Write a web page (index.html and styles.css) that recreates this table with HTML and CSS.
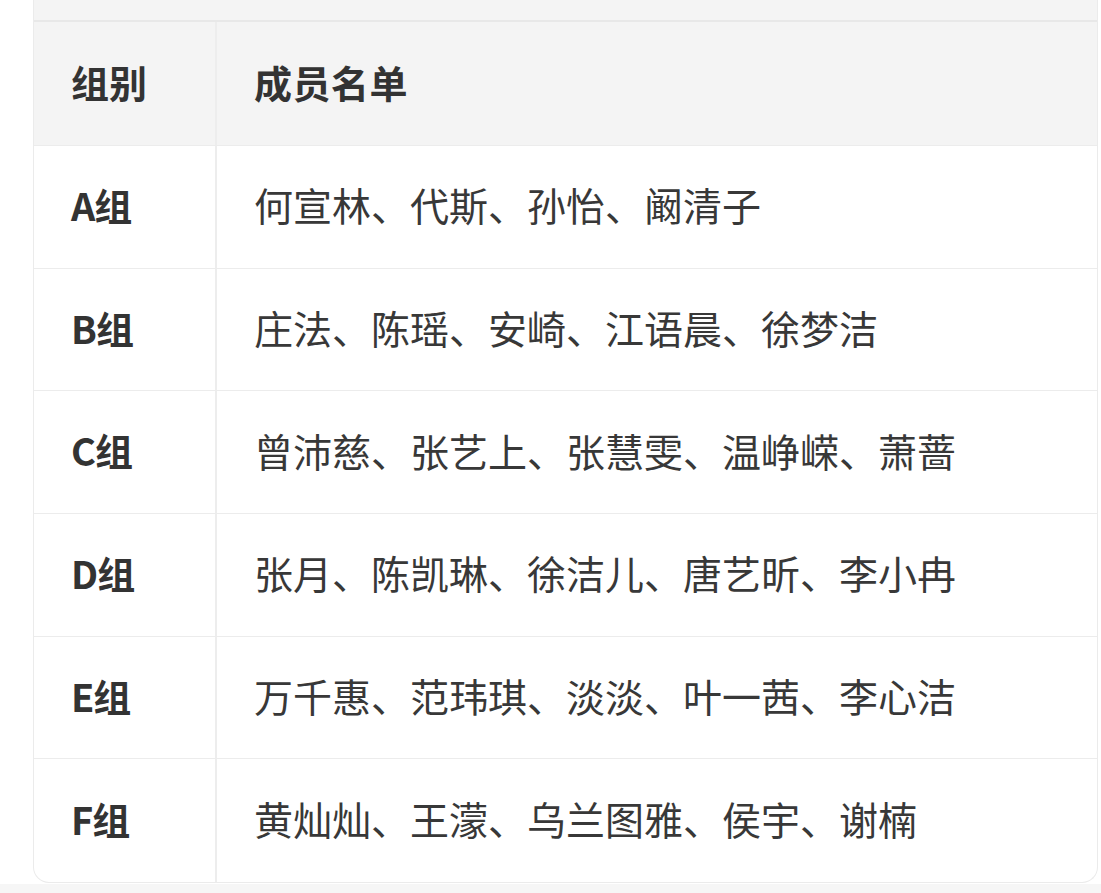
FILE: index.html
```html
<!DOCTYPE html>
<html lang="zh">
<head>
<meta charset="utf-8">
<link rel="stylesheet" href="styles.css">
</head>
<body>
<div class="page">
  <div class="card">
    <div class="strip"></div>
    <div class="row head">
      <div class="cell c1">组别</div>
      <div class="cell c2">成员名单</div>
    </div>
    <div class="row">
      <div class="cell c1 label">A组</div>
      <div class="cell c2">何宣林、代斯、孙怡、阚清子</div>
    </div>
    <div class="row">
      <div class="cell c1 label">B组</div>
      <div class="cell c2">庄法、陈瑶、安崎、江语晨、徐梦洁</div>
    </div>
    <div class="row">
      <div class="cell c1 label">C组</div>
      <div class="cell c2">曾沛慈、张艺上、张慧雯、温峥嵘、萧蔷</div>
    </div>
    <div class="row">
      <div class="cell c1 label">D组</div>
      <div class="cell c2">张月、陈凯琳、徐洁儿、唐艺昕、李小冉</div>
    </div>
    <div class="row">
      <div class="cell c1 label">E组</div>
      <div class="cell c2">万千惠、范玮琪、淡淡、叶一茜、李心洁</div>
    </div>
    <div class="row last">
      <div class="cell c1 label">F组</div>
      <div class="cell c2">黄灿灿、王濛、乌兰图雅、侯宇、谢楠</div>
    </div>
  </div>
</div>
</body>
</html>
```

FILE: styles.css
```css
html, body {
  margin: 0;
  padding: 0;
  background: #f6f6f6;
}
.page {
  background: #ffffff;
  padding: 0 3px 0 33px;
  height: 884px;
  box-sizing: border-box;
}
.card {
  border-left: 1px solid #ebebeb;
  border-right: 1px solid #ebebeb;
  border-bottom: 1px solid #ebebeb;
  border-radius: 0 0 16px 16px;
  overflow: hidden;
  background: #ffffff;
  font-family: "Noto Sans CJK SC", "Noto Sans", sans-serif;
  color: #333333;
  font-size: 38px;
}
.strip {
  height: 20px;
  background: #f4f4f4;
  border-bottom: 2px solid #e8e8e8;
}
.row {
  display: grid;
  grid-template-columns: 183px 1fr;
  height: 122.7px;
  box-sizing: border-box;
  border-bottom: 1px solid #ececec;
}
.row.head {
  height: 124px;
  background: #f4f4f4;
  font-weight: 700;
  border-bottom: 1px solid #ececec;
}
.row.last {
  border-bottom: none;
}
.cell {
  display: flex;
  align-items: center;
  padding-left: 37px;
  padding-bottom: 4px;
  line-height: 1;
  white-space: nowrap;
}
.c1 {
  border-right: 2px solid #ededed;
}
.c2 {
  padding-left: 37px;
  font-size: 39px;
  color: #383838;
}
.head .c2 {
  font-size: 38px;
  letter-spacing: 0.5px;
  color: #333333;
}
.label {
  font-weight: 700;
  letter-spacing: -1px;
}
```
